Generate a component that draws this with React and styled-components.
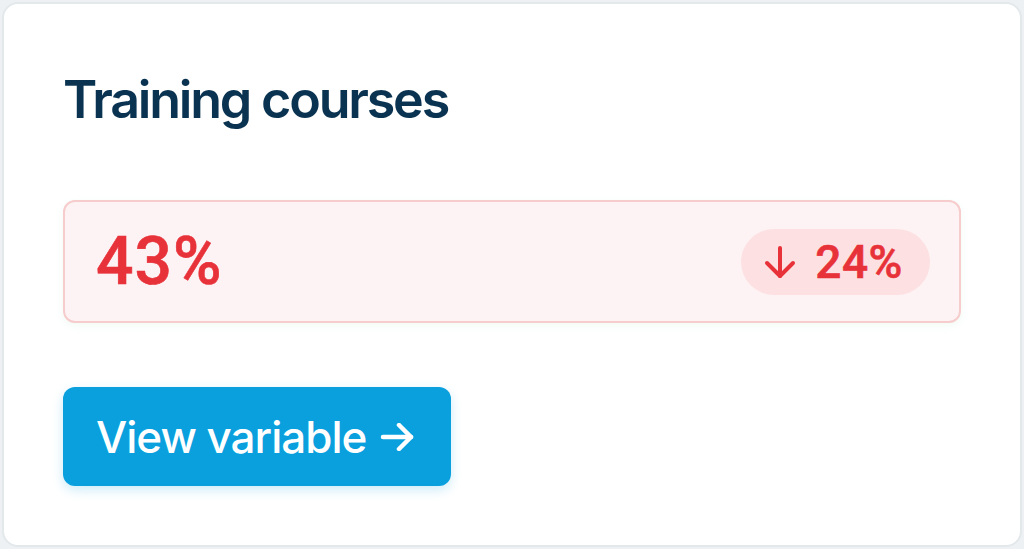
import React from 'react';
import styled, { createGlobalStyle } from 'styled-components';

const GlobalStyle = createGlobalStyle`
  html, body {
    margin: 0;
    padding: 0;
    background: #eef1f3;
    font-family: Inter, "Noto Sans", sans-serif;
  }
  #root {
    height: 549px;
  }
`;

const Page = styled.div`
  box-sizing: border-box;
  height: 549px;
  padding: 2px;
`;

const Card = styled.div`
  box-sizing: border-box;
  height: 100%;
  background: #ffffff;
  border: 2px solid #e3e8eb;
  border-radius: 16px;
  padding: 70px 59px 0;
  display: flex;
  flex-direction: column;
`;

const Title = styled.h2`
  margin: 0;
  color: #0a3351;
  font-size: 52px;
  font-weight: 600;
  letter-spacing: -2.2px;
  line-height: 52px;
`;

const Metric = styled.div`
  margin-top: 74px;
  height: 123px;
  box-sizing: border-box;
  background: #fdf3f4;
  border: 2px solid #f6cccd;
  border-radius: 12px;
  display: flex;
  align-items: center;
  justify-content: space-between;
  padding: 0 29px 0 31px;
  box-shadow: 0 3px 8px rgba(140, 220, 170, 0.12);
`;

const Number = styled.span`
  font-family: Roboto, "Liberation Sans", Arial, sans-serif;
  font-weight: 500;
  font-size: ${({ size }) => size}px;
  letter-spacing: ${({ spacing = 0 }) => spacing}px;
  line-height: 1;
  -webkit-text-stroke: 0.6px currentColor;
`;

const Value = styled(Number)`
  color: #e8323a;
`;

const Badge = styled.span`
  display: inline-flex;
  align-items: center;
  gap: 18px;
  height: 66px;
  padding: 0 27px 0 22px;
  border-radius: 33px;
  background: #fde1e2;
  color: #e8323a;
`;

const Button = styled.button`
  margin-top: 64px;
  align-self: flex-start;
  height: 99px;
  padding: 0 37px 0 33px;
  border: none;
  border-radius: 12px;
  background: #0aa0de;
  color: #ffffff;
  font-family: Inter, "Noto Sans", sans-serif;
  font-size: 44px;
  font-weight: 500;
  letter-spacing: -1px;
  display: inline-flex;
  align-items: center;
  gap: 14px;
  box-shadow: 0 4px 12px rgba(10, 160, 222, 0.2);
  cursor: pointer;
`;

const ArrowDown = () => (
  <svg width="34" height="34" viewBox="0 0 34 34" fill="none" stroke="currentColor" strokeWidth="4" strokeLinecap="round" strokeLinejoin="round">
    <path d="M17 3v28" />
    <path d="M4 18l13 13 13-13" />
  </svg>
);

const ArrowRight = () => (
  <svg width="34" height="28" viewBox="0 0 34 28" fill="none" stroke="currentColor" strokeWidth="4.5" strokeLinecap="round" strokeLinejoin="round">
    <path d="M3 14h28" />
    <path d="M19 2l12 12-12 12" />
  </svg>
);

export default function App() {
  return (
    <Page>
      <GlobalStyle />
      <Card>
        <Title>Training courses</Title>
        <Metric>
          <Value size={66} spacing={1}>43%</Value>
          <Badge>
            <ArrowDown />
            <Number size={46} spacing={0.5}>24%</Number>
          </Badge>
        </Metric>
        <Button>
          View variable
          <ArrowRight />
        </Button>
      </Card>
    </Page>
  );
}
